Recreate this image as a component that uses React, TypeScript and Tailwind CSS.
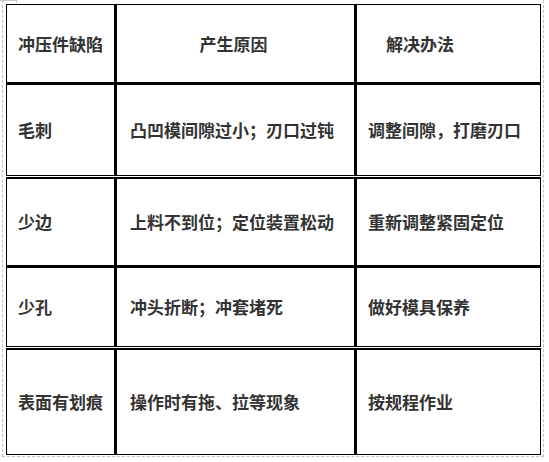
import React from "react";

const font = {
  fontFamily: '"Noto Sans CJK SC", "Noto Sans", sans-serif',
};

function Row({
  h,
  a,
  b,
  c,
  header,
}: {
  h: string;
  a: string;
  b: string;
  c: string;
  header?: boolean;
}) {
  return (
    <div className={`flex ${h}`}>
      <div className="w-[110px] shrink-0 flex items-center pl-[11px] border-r-[3px] border-black">
        {a}
      </div>
      <div
        className={`w-[240px] shrink-0 flex items-center border-r-[3px] border-black ${
          header ? "justify-center pr-[4px]" : "pl-[13px]"
        }`}
      >
        {b}
      </div>
      <div className={`flex-1 flex items-center ${header ? "pl-[29px]" : "pl-[11px]"}`}>
        {c}
      </div>
    </div>
  );
}

export default function App() {
  return (
    <div
      className="relative w-[549px] h-[462px] bg-white text-[#333333] font-bold text-[17px] leading-none"
      style={font}
    >
      <div className="absolute left-0 top-0 w-[17px] h-[1px] bg-[#c8c8c8]" />
      <div className="absolute left-[16px] top-0 w-[1px] h-[3px] bg-[#c8c8c8]" />
      <div className="ml-[2px] w-[542px] h-[457px] border-l border-r border-b border-dashed border-[#c0c0c0]">
        <div className="ml-[3px] pt-[3.5px] w-[535px] flex flex-col">
          <div className="border-x-[1.5px] border-t-[1.5px] border-b border-black flex flex-col">
            <Row h="h-[77px]" a="冲压件缺陷" b="产生原因" c="解决办法" header />
            <div className="h-[3px] bg-black" />
            <Row h="h-[90px]" a="毛刺" b="凸凹模间隙过小；刃口过钝" c="调整间隙，打磨刃口" />
          </div>
          <div className="h-[1px]" />
          <div className="border-x-[1.5px] border-t-[2px] border-b border-black flex flex-col">
            <Row h="h-[86px]" a="少边" b="上料不到位；定位装置松动" c="重新调整紧固定位" />
            <div className="h-[3px] bg-black" />
            <Row h="h-[78px]" a="少孔" b="冲头折断；冲套堵死" c="做好模具保养" />
          </div>
          <div className="h-[1px]" />
          <div className="border-x-[1.5px] border-t-[2px] border-b border-black flex flex-col">
            <Row h="h-[104px]" a="表面有划痕" b="操作时有拖、拉等现象" c="按规程作业" />
          </div>
        </div>
      </div>
    </div>
  );
}
